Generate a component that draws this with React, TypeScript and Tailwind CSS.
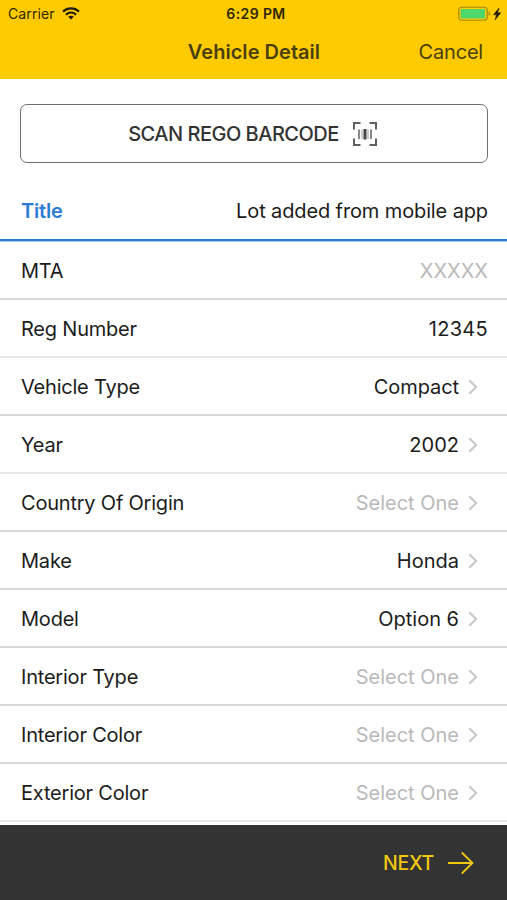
type Field = { label: string; value: string; placeholder?: boolean; select?: boolean; tracking?: string; border?: string };

const fields: Field[] = [
  { label: "MTA", value: "XXXXX", placeholder: true },
  { label: "Reg Number", value: "12345", tracking: "tracking-[0.300px]", border: "border-[#e8e8e8]" },
  { label: "Vehicle Type", value: "Compact", tracking: "tracking-[-0.080px]", select: true },
  { label: "Year", value: "2002", select: true, border: "border-[#e8e8e8]" },
  { label: "Country Of Origin", value: "Select One", placeholder: true, select: true },
  { label: "Make", value: "Honda", select: true },
  { label: "Model", value: "Option 6", select: true },
  { label: "Interior Type", value: "Select One", placeholder: true, select: true },
  { label: "Interior Color", value: "Select One", placeholder: true, select: true },
  { label: "Exterior Color", value: "Select One", placeholder: true, select: true, border: "border-[#e8e8e8]" },
];

function Wifi() {
  return (
    <svg width="18" height="13" viewBox="0 0 18 13" fill="none" stroke="#211c05" strokeWidth="2.2">
      <path d="M1 4.6C5.5.4 12.5.4 17 4.6" />
      <path d="M3.9 7.7c3-2.7 7.2-2.7 10.2 0" />
      <path d="M9 12.4 6.2 9.7c1.7-1.4 3.9-1.4 5.6 0z" fill="#211c05" stroke="none" />
    </svg>
  );
}

function Battery() {
  return (
    <svg width="44" height="16" viewBox="0 0 44 16">
      <rect x="0.75" y="1.25" width="28.5" height="13" rx="3" fill="none" stroke="#a38a12" strokeWidth="1.2" />
      <rect x="2.7" y="3" width="24.4" height="9.5" rx="1.2" fill="#4cd86b" />
      <path d="M30.5 5.5c2 .6 2 4 0 4.600z" fill="#a38a12" />
      <path d="M41 2 35.400 8.800h3.100L37 14l5.800-7.300h-3.200z" fill="#211c05" stroke="#211c05" strokeWidth="0.500" />
    </svg>
  );
}

function BarcodeScan() {
  return (
    <svg width="26" height="26" viewBox="0 0 26 26" fill="none" stroke="#606060" strokeWidth="2">
      <path d="M2 8.500V2h6.500M17.500 2H24v6.500M24 17.500V24h-6.500M8.500 24H2v-6.500" />
      <path d="M7 8.500v9.500M19 8.500v9.500" strokeWidth="1.500" />
      <path d="M10 8.500v9.500M16 8.500v9.500" strokeWidth="1" stroke="#999" />
      <path d="M13 8v10.500" strokeWidth="3" stroke="#444" />
    </svg>
  );
}

function Chevron() {
  return (
    <svg className="ml-[9px] mr-2.5" width="10" height="16" viewBox="0 0 10 16" fill="none" stroke="#c7c7cb" strokeWidth="2">
      <path d="M1.300 1.200 8.200 8l-6.900 6.800" />
    </svg>
  );
}

export default function App() {
  return (
    <div className="flex h-[900px] w-[507px] flex-col overflow-hidden bg-white font-['Inter','Liberation_Sans',sans-serif] text-[20px] whitespace-nowrap text-[#1c1c1c]">
      <header className="h-[79px] shrink-0 bg-[#fecb00] text-[#4a3f10]">
        <div className="grid h-[27px] grid-cols-3 items-center pr-[5px] pl-2 text-[14px] text-[#2e2706]">
          <div className="flex items-center gap-[7px]">
            <span className="tracking-[0.100px]">Carrier</span>
            <Wifi />
          </div>
          <span className="pl-0.5 text-center font-semibold tracking-[0.400px]">6:29 PM</span>
          <div className="flex justify-end"><Battery /></div>
        </div>
        <div className="grid h-[50px] grid-cols-[1fr_auto_1fr] items-center pr-6 pl-[25px]">
          <span />
          <h1 className="font-semibold tracking-[0.030px]">Vehicle Detail</h1>
          <span className="text-right tracking-[-0.200px]">Cancel</span>
        </div>
      </header>

      <main className="flex min-h-0 grow flex-col">
        <button className="mx-5 mt-[25px] flex h-[59px] w-[468px] shrink-0 items-center justify-center gap-[13px] rounded-[7px] border-[1.500px] border-[#707070] pr-[2px] font-medium text-[#333]">
          <span className="tracking-[-0.500px]">SCAN REGO BARCODE</span>
          <BarcodeScan />
        </button>
        <div className="mt-[18px] mb-[1.300px] flex h-[60px] shrink-0 items-center justify-between border-b-2 border-[#2f78cf] pt-px pr-[19px] pl-[21px] shadow-[0_1px_0_#a5caf3]">
          <span className="font-semibold tracking-[-0.200px] text-[#2a7bd6]">Title</span>
          <span className="tracking-[-0.120px]">Lot added from mobile app</span>
        </div>
        {fields.map((f) => (
          <div key={f.label} className={`flex h-[58px] shrink-0 items-center justify-between border-b-2 pt-px pr-[19px] pl-[21px] ${f.border ?? "border-[#d9d9d9]"}`}>
            <span className="tracking-[-0.210px]">{f.label}</span>
            <span className={`flex items-center ${f.placeholder ? "text-[#b9b9b9]" : ""} ${f.tracking ?? ""}`}>
              {f.value}
              {f.select && <Chevron />}
            </span>
          </div>
        ))}
      </main>

      <footer className="flex h-[75px] shrink-0 items-center justify-end gap-[13px] bg-[#333] pr-[33px] font-medium text-[#f2c80f]">
        <span className="pt-[3px] text-[19.500px] tracking-[-0.300px]">NEXT</span>
        <svg width="27" height="24" viewBox="0 0 27 24" fill="none" stroke="currentColor" strokeWidth="1.800">
          <path d="M1 12h24.500M14.800 1.500 25.500 12 14.800 22.500" />
        </svg>
      </footer>
    </div>
  );
}
